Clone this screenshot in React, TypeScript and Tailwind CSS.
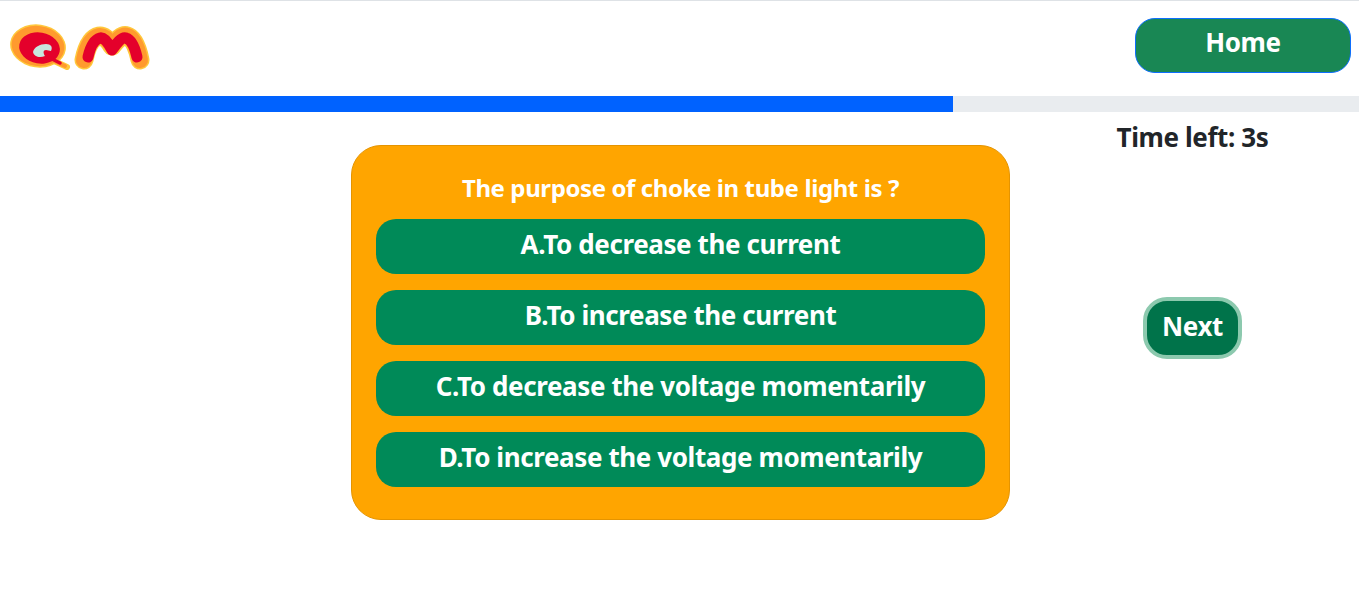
const options = [
  "A.To decrease the current",
  "B.To increase the current",
  "C.To decrease the voltage momentarily",
  "D.To increase the voltage momentarily",
];

function Logo() {
  return (
    <svg width="140" height="46" viewBox="0 0 140 46" className="block">
      <g transform="translate(-10,-24)">
        <g>
          <path d="M52 60 L67 67" stroke="#ffc83c" strokeWidth="6" strokeLinecap="round" fill="none" />
          <ellipse cx="38" cy="46" rx="28" ry="21.5" transform="rotate(8 38 46)" fill="#ffc83c" />
          <ellipse cx="38" cy="46" rx="26.5" ry="20" transform="rotate(8 38 46)" fill="#ff9a2e" />
          <path d="M52 60 L65 66" stroke="#ff9a2e" strokeWidth="4" strokeLinecap="round" fill="none" />
          <ellipse cx="39.5" cy="48" rx="20.5" ry="15.5" transform="rotate(10 39.5 48)" fill="#e4002b" />
          <path d="M50 58 L60 63" stroke="#e4002b" strokeWidth="3.5" strokeLinecap="round" fill="none" />
          <path d="M33 52 C34 47 40 44 46 44 C51 44 53 47 51 51 L46 50 C43 50 43 53 45 56 C40 58 34 57 33 52 Z" fill="#c8e6de" />
        </g>
        <g strokeLinejoin="round" strokeLinecap="round" fill="none">
          <path d="M84 60 C86 50 90 38 99 36 C104 35 109 41 112 46 C116 41 122 34 127 36 C134 38 138 50 140 60" stroke="#ffc83c" strokeWidth="19" />
          <path d="M84 60 C86 50 90 38 99 36 C104 35 109 41 112 46 C116 41 122 34 127 36 C134 38 138 50 140 60" stroke="#ff9a2e" strokeWidth="16" />
          <path d="M88 57 C90 48 93 40 100 38 C104 37 109 44 112 50 C116 44 122 36 126 38 C132 40 135 48 137 57" stroke="#e4002b" strokeWidth="11" />
        </g>
      </g>
    </svg>
  );
}

export default function App() {
  return (
    <div className="min-h-[615px] bg-white font-['Noto_Sans',sans-serif] text-[#212529]">
      <div className="flex h-[96px] items-start justify-between border-t border-[#dee2e6] pl-[10px] pr-2">
        <div className="mt-[23px]"><Logo /></div>
        <button className="mt-[17px] flex h-[55px] w-[216px] justify-center rounded-[20px] border border-[#0d6efd] bg-[#198754] bg-[#008a58] pt-[5px] text-[26px] leading-[36px] font-bold tracking-[-0.4px] text-white">
          Home
        </button>
      </div>
      <div className="h-4 bg-[#e9ecef]">
        <div className="h-full w-[70.13%] bg-[#0062ff]" />
      </div>
      <div className="flex items-start">
        <div className="w-[351px] shrink-0" />
        <div className="mt-[33px] flex w-[659px] shrink-0 flex-col rounded-[30px] border border-[#e59400] bg-[#ffa500] px-6 pt-[24px] pb-[32px]">
          <p className="mb-[13px] text-center text-[24px] leading-[36px] font-bold tracking-[-0.4px] text-white">
            The purpose of choke in tube light is ?
          </p>
          <div className="flex flex-col gap-4">
            {options.map((o) => (
              <button
                key={o}
                className="flex h-[55px] justify-center rounded-[20px] bg-[#008a58] pt-[7px] text-[26px] leading-[36px] font-bold tracking-[-0.4px] text-white"
              >
                {o}
              </button>
            ))}
          </div>
        </div>
        <div className="ml-4 flex flex-1 flex-col items-center">
          <p className="mt-[7px] text-[26px] leading-[36px] font-bold tracking-[-0.4px]">Time left: 3s</p>
          <button className="mt-[142px] flex h-[62px] w-[99px] items-center justify-center rounded-[24px] border-4 border-[#8cc9ae] bg-[#00734a] pb-[4px] text-[26px] leading-[36px] font-bold tracking-[-0.4px] text-white">
            Next
          </button>
        </div>
      </div>
    </div>
  );
}
